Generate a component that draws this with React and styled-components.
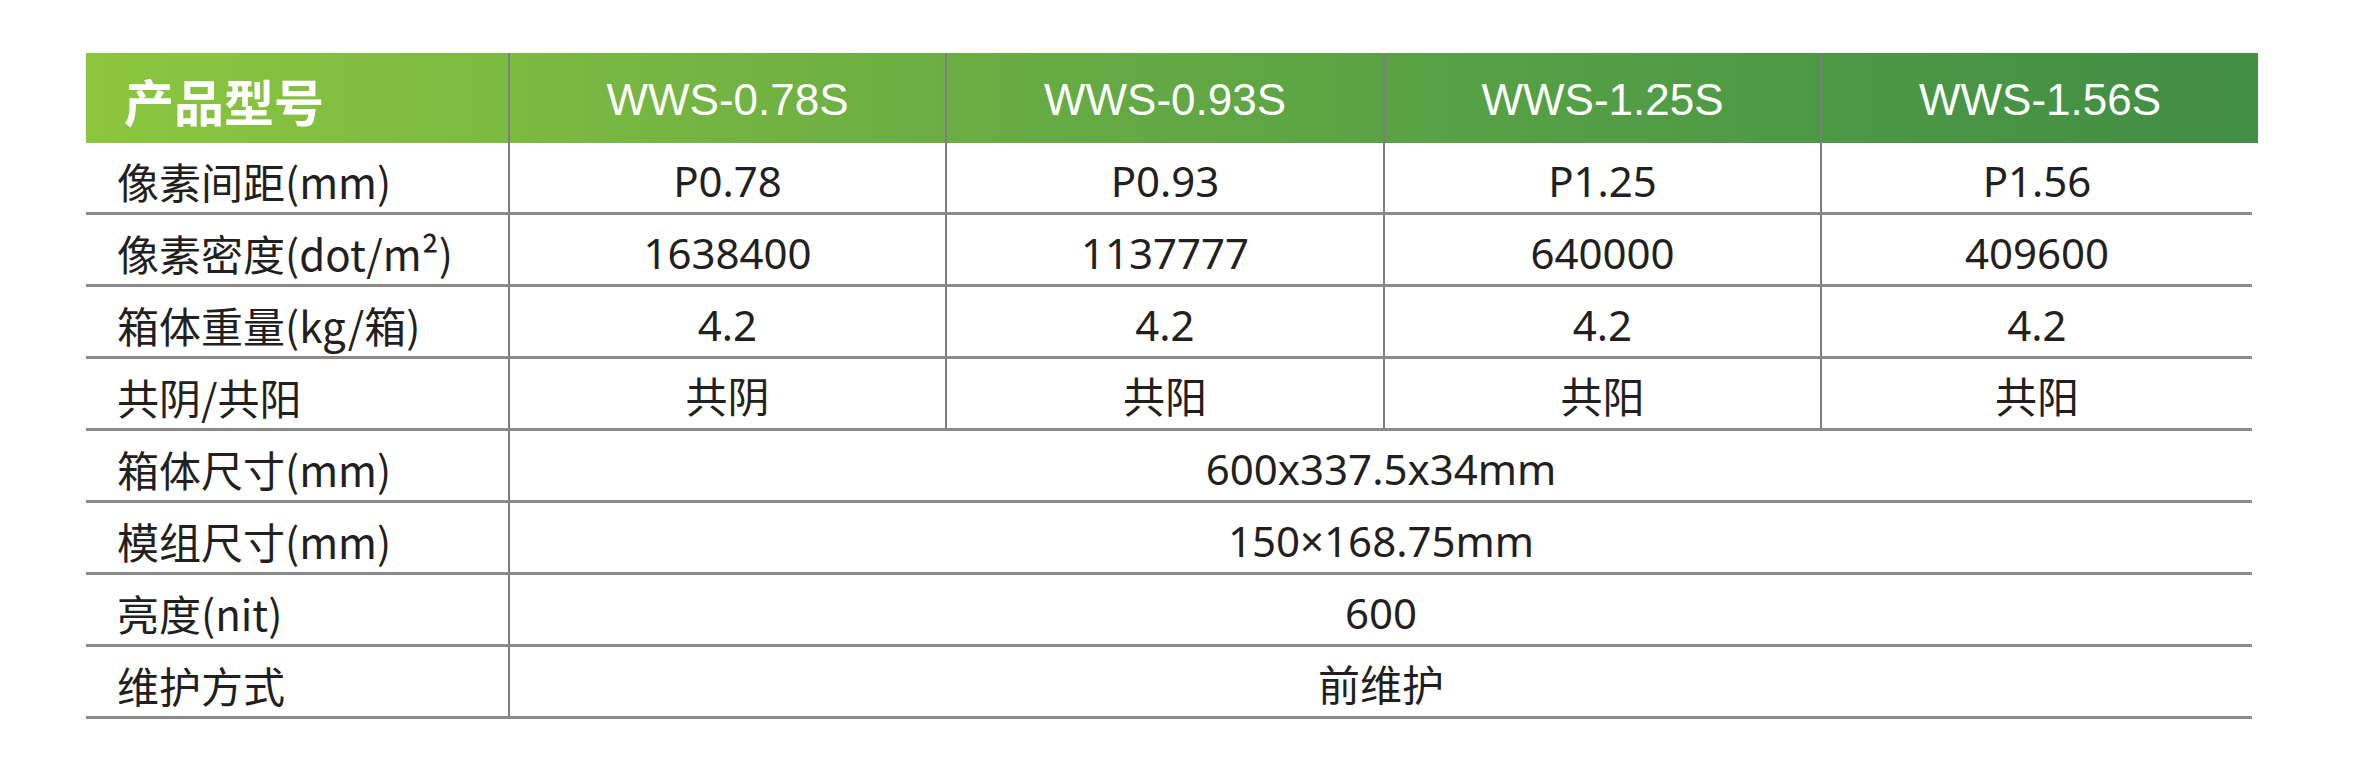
import React from "react";
import styled, { createGlobalStyle } from "styled-components";

const GlobalStyle = createGlobalStyle`
  html, body {
    margin: 0;
    padding: 0;
    background: #ffffff;
  }
  body {
    font-family: "Noto Sans CJK SC", "Noto Sans", sans-serif;
  }
`;

const models = ["WWS-0.78S", "WWS-0.93S", "WWS-1.25S", "WWS-1.56S"];

const rows = [
  { label: "像素间距(mm)", values: ["P0.78", "P0.93", "P1.25", "P1.56"] },
  { label: "像素密度(dot/m²)", values: ["1638400", "1137777", "640000", "409600"] },
  { label: "箱体重量(kg/箱)", values: ["4.2", "4.2", "4.2", "4.2"] },
  { label: "共阴/共阳", values: ["共阴", "共阳", "共阳", "共阳"] },
  { label: "箱体尺寸(mm)", span: "600x337.5x34mm" },
  { label: "模组尺寸(mm)", span: "150×168.75mm" },
  { label: "亮度(nit)", span: "600" },
  { label: "维护方式", span: "前维护" },
];

const COLS = "422px 437px 438px 437px 1fr";

const Page = styled.div`
  padding: 53px 98px 0 86px;
  width: 2356px;
  box-sizing: border-box;
`;

const Table = styled.div`
  width: 2172px;
`;

const HeadRow = styled.div`
  display: grid;
  grid-template-columns: ${COLS};
  height: 90px;
  background: linear-gradient(90deg, #8cc63f 0%, #6fb043 35%, #56a045 65%, #418e45 100%);
`;

const HeadCell = styled.div`
  display: flex;
  align-items: center;
  justify-content: ${(p) => (p.$first ? "flex-start" : "center")};
  padding-left: ${(p) => (p.$first ? "38px" : "0")};
  color: #ffffff;
  border-left: ${(p) => (p.$first ? "none" : "2px solid #7e7e82")};
  font-family: ${(p) =>
    p.$first
      ? '"Noto Sans CJK SC", sans-serif'
      : '"Liberation Sans", Arial, sans-serif'};
  font-size: ${(p) => (p.$first ? "50px" : "44px")};
  font-weight: ${(p) => (p.$first ? 700 : 400)};
  padding-top: 4px;
  box-sizing: border-box;
`;

const Body = styled.div`
  margin-right: 6px;
`;

const Row = styled.div`
  display: grid;
  grid-template-columns: ${(p) => (p.$span ? "422px 1fr" : COLS)};
  height: 72px;
  box-sizing: border-box;
  border-bottom: 3px solid #8a8a8a;
`;

const Label = styled.div`
  display: flex;
  align-items: center;
  padding: 6px 0 0 31px;
  font-size: 42px;
  color: #231f20;
  line-height: 1;
  box-sizing: border-box;
`;

const Cell = styled.div`
  display: flex;
  align-items: center;
  justify-content: center;
  padding-top: 6px;
  font-family: "Noto Sans", "Noto Sans CJK SC", sans-serif;
  font-size: 42px;
  color: #231f20;
  line-height: 1;
  border-left: 2px solid #7e7e82;
  box-sizing: border-box;
`;

export default function App() {
  return (
    <>
      <GlobalStyle />
      <Page>
        <Table>
          <HeadRow>
            <HeadCell $first>产品型号</HeadCell>
            {models.map((m) => (
              <HeadCell key={m}>{m}</HeadCell>
            ))}
          </HeadRow>
          <Body>
            {rows.map((r) => (
              <Row key={r.label} $span={!!r.span}>
                <Label>{r.label}</Label>
                {r.span ? (
                  <Cell>{r.span}</Cell>
                ) : (
                  r.values.map((v, i) => <Cell key={i}>{v}</Cell>)
                )}
              </Row>
            ))}
          </Body>
        </Table>
      </Page>
    </>
  );
}
